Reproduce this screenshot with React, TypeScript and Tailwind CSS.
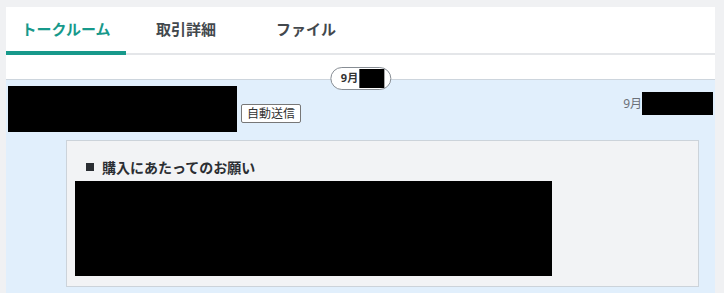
import React from "react";

const tabs = ["トークルーム", "取引詳細", "ファイル"];

const App: React.FC = () => {
  return (
    <div
      className="min-h-screen bg-[#f0f1f3] pl-[6px] pr-[9px] pt-[7px]"
      style={{ fontFamily: '"Noto Sans", "Noto Sans CJK JP", sans-serif' }}
    >
      <div className="bg-white">
        {/* Tabs */}
        <div className="flex border-b-2 border-[#e4e6e9]">
          {tabs.map((tab, i) => (
            <div
              key={tab}
              className={`relative w-[120px] h-[46px] flex items-center justify-center pb-[1px] text-[15px] font-bold ${
                i === 0 ? "text-[#17998b]" : "text-[#43484d]"
              }`}
            >
              {tab}
              {i === 0 && (
                <span className="absolute left-0 right-0 -bottom-[2px] h-[4px] bg-[#17998b]" />
              )}
            </div>
          ))}
        </div>

        {/* Date separator */}
        <div className="relative h-[25px] border-b border-[#cdd5dd]">
          <div className="absolute left-1/2 -translate-x-1/2 top-[12px] h-[23px] flex items-center gap-[1px] pl-[10px] pr-[6px] rounded-full border border-[#878d94] bg-white">
            <span className="text-[11px] font-bold text-[#333]">9月</span>
            <span className="block w-[25px] h-[19px] bg-black" />
          </div>
        </div>

        {/* Chat area */}
        <div className="bg-[#e1effc] pt-[6px] px-[2px] pb-[12px]">
          <div className="flex justify-between">
            <div className="flex items-end">
              <div className="w-[229px] h-[46px] bg-black" />
              <span className="ml-[4px] mb-[9px] px-[5px] h-[19px] flex items-center text-[12px] leading-none text-[#333] bg-white border border-[#777] rounded-[2px]">
                自動送信
              </span>
            </div>
            <div className="flex items-center mt-[6px] h-[23px] self-start">
              <span className="text-[12px] text-[#6b7078]">9月</span>
              <span className="block w-[71px] h-[23px] bg-black" />
            </div>
          </div>

          {/* Message card */}
          <div className="mt-[8px] ml-[58px] mr-[14px] bg-[#f2f3f5] border border-[#ccd3da] pt-[16px] pl-[8px] pb-[10px]">
            <div className="flex items-center ml-[11px] h-[20px] mb-[4px]">
              <span className="block w-[8px] h-[8px] bg-[#2b2e33]" />
              <span className="ml-[8px] text-[14px] font-bold text-[#2b2e33]">
                購入にあたってのお願い
              </span>
            </div>
            <div className="w-[477px] h-[95px] bg-black" />
          </div>
        </div>
      </div>
    </div>
  );
};

export default App;
